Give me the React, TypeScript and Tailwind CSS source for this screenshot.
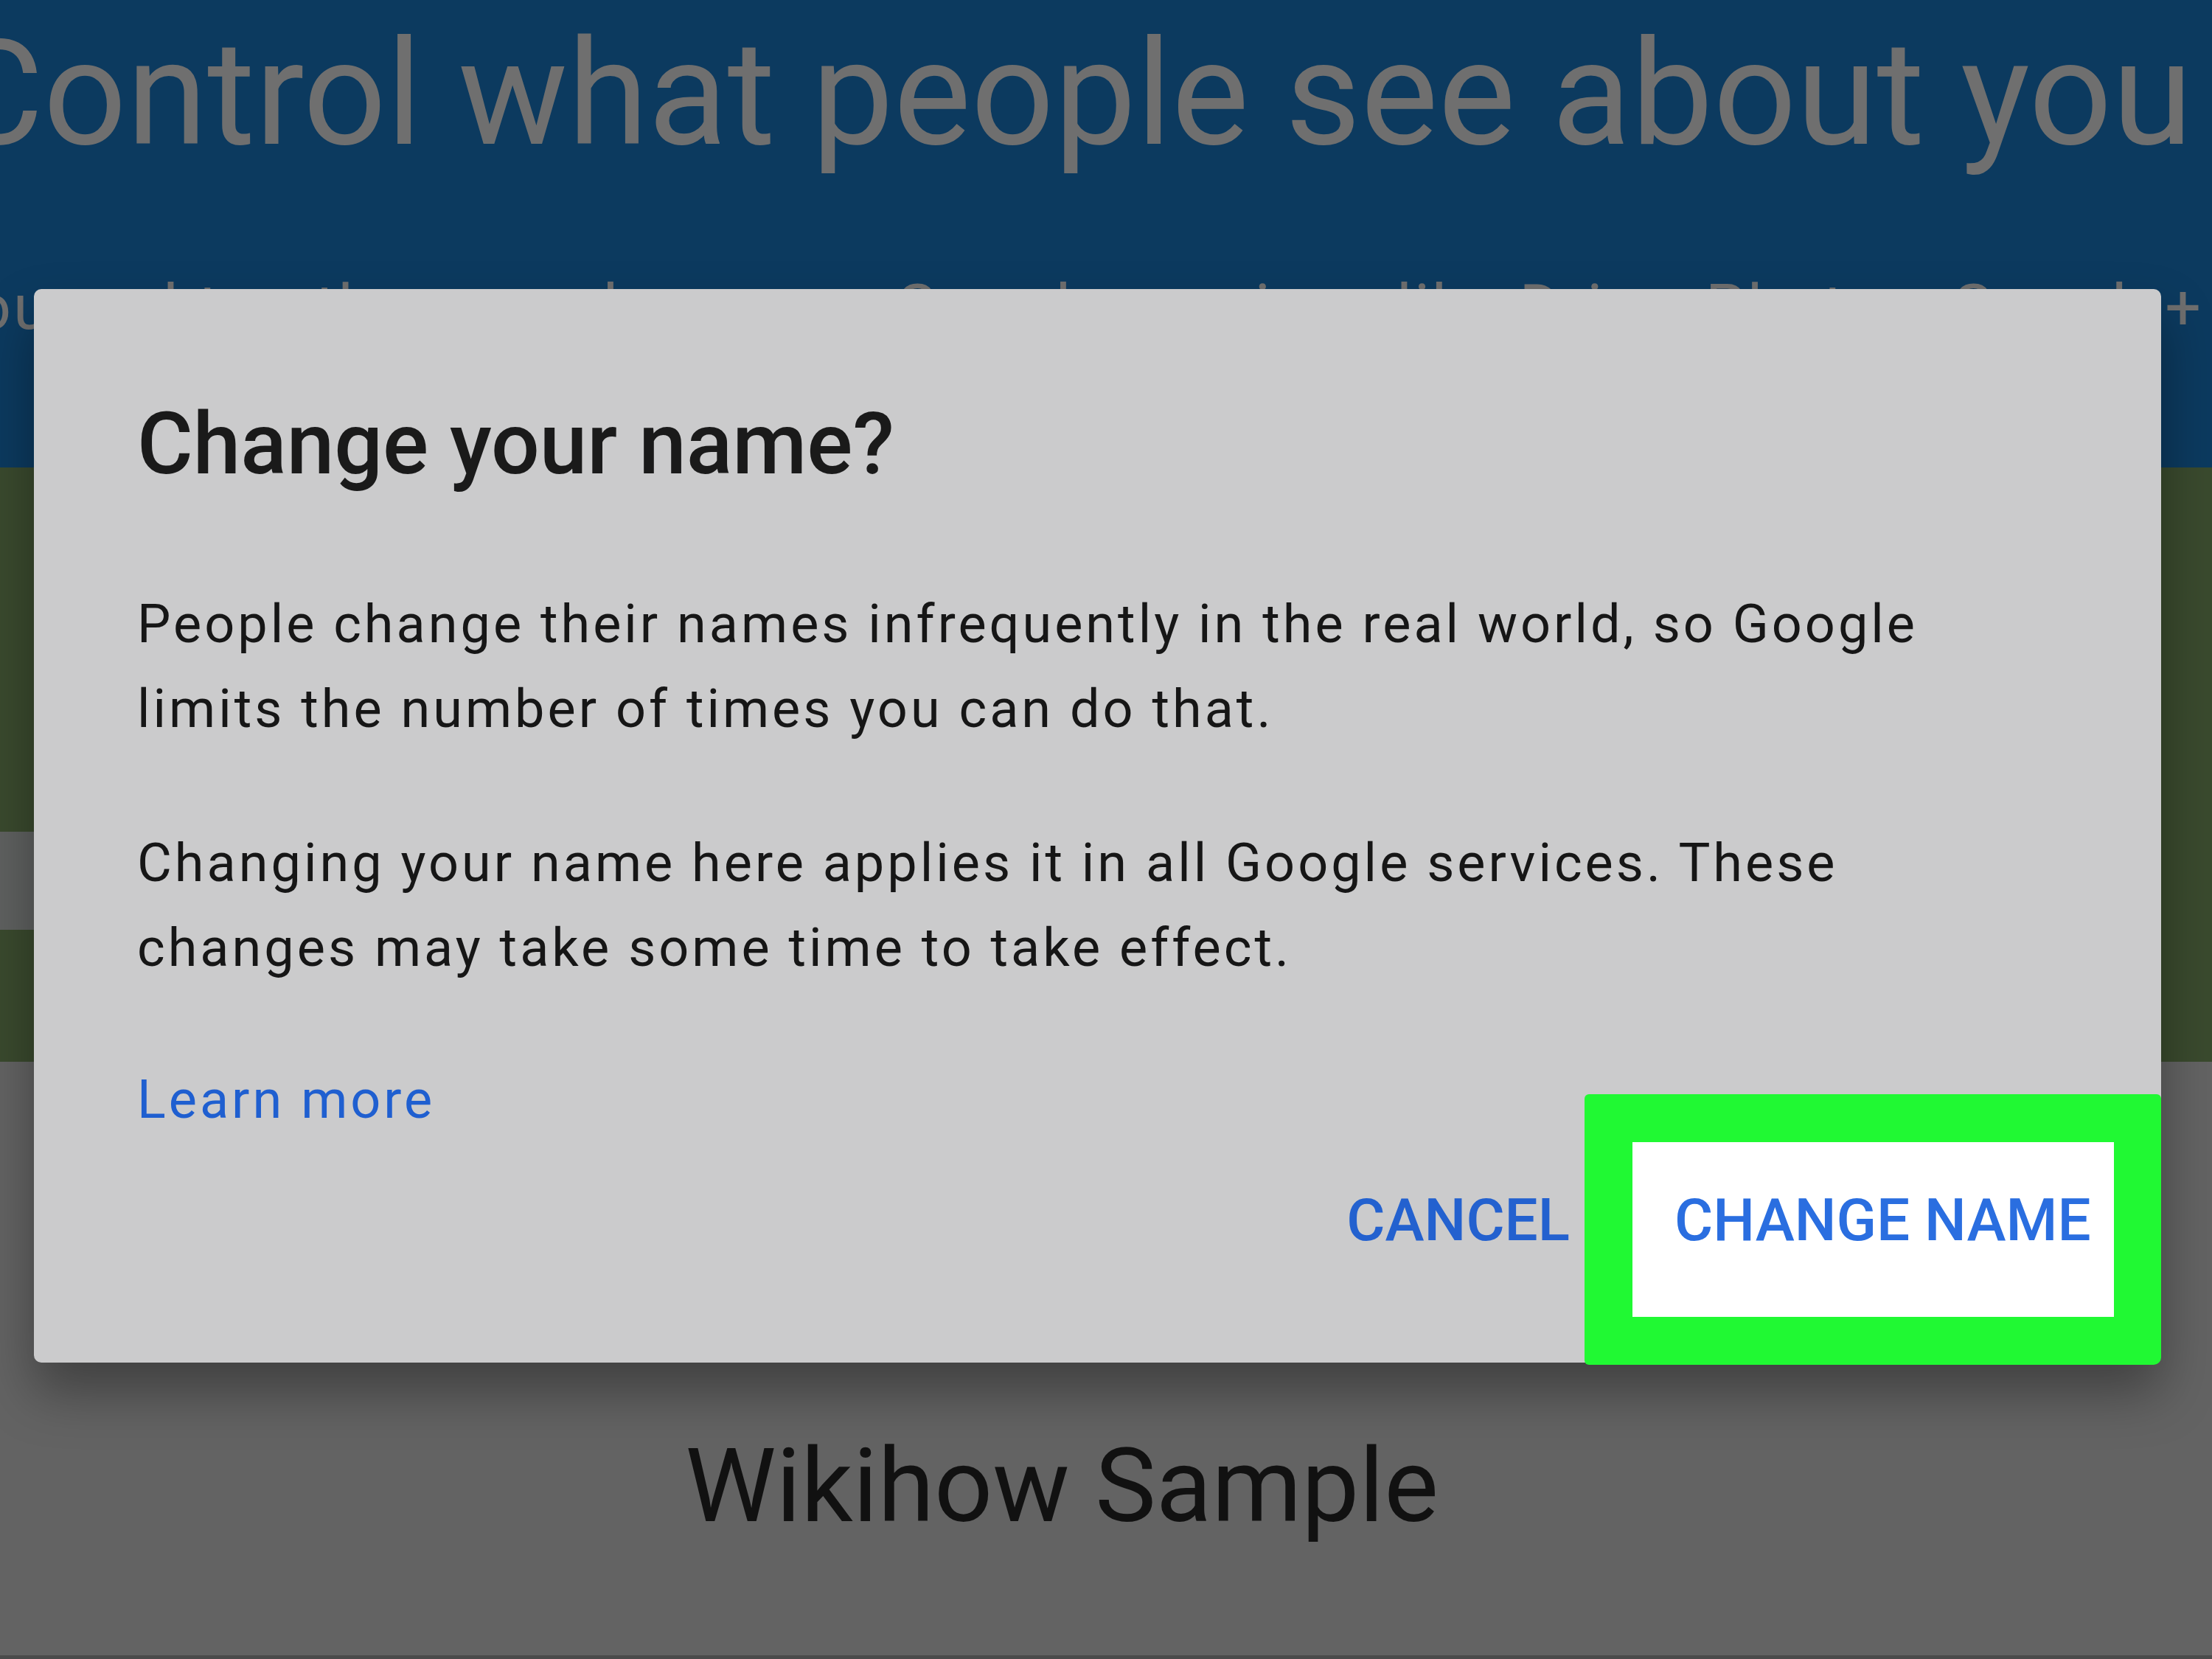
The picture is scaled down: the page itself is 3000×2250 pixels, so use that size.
import React from "react";

const roboto = { fontFamily: "Roboto, 'Liberation Sans', sans-serif" };

export default function App() {
  return (
    <div className="relative w-[3000px] h-[2250px] overflow-hidden bg-[#636363]" style={roboto}>
      {/* page behind the dialog */}
      <div className="h-[634px] bg-[#0c3a5f] overflow-hidden">
        <h1 className="pt-[28px] -ml-[70px] whitespace-nowrap text-[198px] leading-none font-normal text-[#6f6f6f]">
          Control what people see about you
        </h1>
        <div className="mt-[148px] flex justify-end pr-[12px] whitespace-nowrap text-[86px] leading-none tracking-[3px] text-[#6f6f6f]">
          Decide what info is visible to you and to other people across Google services like Drive, Photos, Google+
        </div>
      </div>

      <div className="h-[806px] bg-[#3a4a2e] pt-[494px]">
        <div className="w-[700px] h-[133px] bg-[#5f6160]" />
      </div>

      <div className="flex justify-center pr-[120px] pt-[506px]">
        <span className="text-[139px] leading-none text-[#111111]">Wikihow Sample</span>
      </div>
      <div className="absolute left-0 right-0 bottom-0 h-[5px] bg-[#4b4b4b]" />

      {/* dialog */}
      <div className="absolute left-[46px] top-[392px] w-[2885px] h-[1456px] rounded-[10px] bg-[#cbcbcc] shadow-[0_40px_70px_rgba(0,0,0,0.35)] flex flex-col">
        <div className="pl-[140px] pt-[142px] pr-[200px]">
          <h2 className="text-[116px] leading-[136px] font-medium text-[#1a1a1a]">Change your name?</h2>
          <div className="mt-[119px] max-w-[2500px] text-[72px] leading-[115px] tracking-[4px] text-[#161616]">
            <p>
              People change their names infrequently in the real world, so Google limits the number of times you can do
              that.
            </p>
            <p className="mt-[94px]">
              Changing your name here applies it in all Google services. These changes may take some time to take effect.
            </p>
            <p className="mt-[91px] text-[#1f5fd0]">Learn more</p>
          </div>
        </div>

        <div className="relative mt-auto flex justify-end items-start pr-[64px] pb-[65px]">
          {/* highlight around the button */}
          <div className="absolute right-0 bottom-0 w-[782px] h-[367px] bg-[#20f933] rounded-tl-[6px] rounded-tr-[6px] rounded-br-[10px] rounded-bl-[6px]" />
          <button className="mt-[60px] mr-[85px] text-[80px] leading-[93px] font-medium text-[#2361cf]">
            CANCEL
          </button>
          <button className="relative w-[653px] h-[237px] bg-white flex items-start pl-[57px] pt-[60px]">
            <span className="text-[80px] leading-[93px] font-medium text-[#2a6ee0] whitespace-nowrap">CHANGE NAME</span>
          </button>
        </div>
      </div>
    </div>
  );
}
